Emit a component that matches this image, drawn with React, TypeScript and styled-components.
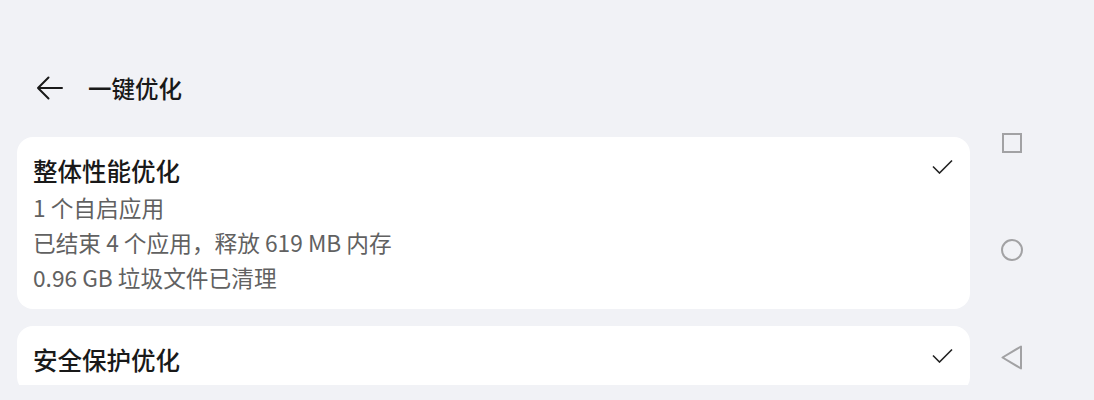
import React from 'react'
import styled, { createGlobalStyle } from 'styled-components'

const GlobalStyle = createGlobalStyle`
  html, body {
    margin: 0;
    padding: 0;
    background: #f1f2f6;
  }
  body {
    font-family: 'Noto Sans CJK SC', 'Noto Sans', sans-serif;
    color: #191919;
  }
`

const Screen = styled.div`
  display: flex;
  width: 1094px;
  height: 400px;
  overflow: hidden;
  background: #f1f2f6;
`

const Main = styled.div`
  display: flex;
  flex-direction: column;
  width: 970px;
  padding-top: 64px;
  box-sizing: border-box;
`

const Header = styled.div`
  display: flex;
  align-items: center;
  height: 48px;
  padding-left: 36px;
  gap: 25px;
`

const BackButton = styled.button`
  display: flex;
  align-items: center;
  justify-content: center;
  padding: 0;
  border: none;
  background: none;
  cursor: pointer;
`

const PageTitle = styled.h1`
  margin: 0;
  font-size: 23.5px;
  font-weight: 500;
  line-height: 32px;
  color: #191919;
`

const List = styled.div`
  display: flex;
  flex-direction: column;
  gap: 17px;
  margin-top: 25px;
  padding-left: 17px;
  height: 248px;
  overflow: hidden;
`

const Card = styled.div`
  display: flex;
  align-items: flex-start;
  flex-shrink: 0;
  background: #ffffff;
  border-radius: 16px;
  padding: 18px 17px 14px 16px;
`

const CardBody = styled.div`
  flex: 1;
  display: flex;
  flex-direction: column;
`

const CardTitle = styled.div`
  font-size: 24.5px;
  font-weight: 500;
  line-height: 32px;
  margin-bottom: 3px;
  color: #191919;
`

const Detail = styled.div`
  font-size: 22.7px;
  line-height: 35px;
  color: #616161;
`

const CheckMark = styled.svg`
  margin-top: 4px;
  flex-shrink: 0;
`

const NavBar = styled.div`
  display: flex;
  flex-direction: column;
  align-items: center;
  width: 84px;
  padding-top: 133px;
`

const NavSlot = styled.div<{ $h: number }>`
  display: flex;
  justify-content: center;
  height: ${(p) => p.$h}px;
`

const Check = () => (
  <CheckMark width="21" height="15" viewBox="0 0 21 15">
    <path d="M1 7.5 L7.5 14 L20 1.5" fill="none" stroke="#222" strokeWidth="1.6" />
  </CheckMark>
)

const sections = [
  {
    title: '整体性能优化',
    details: ['1 个自启应用', '已结束 4 个应用，释放 619 MB 内存', '0.96 GB 垃圾文件已清理'],
  },
  {
    title: '安全保护优化',
    details: [],
  },
]

const App = () => {
  return (
    <>
      <GlobalStyle />
      <Screen>
        <Main>
          <Header>
            <BackButton aria-label="返回">
              <svg width="27" height="24" viewBox="0 0 27 24">
                <path
                  d="M26 12 H2 M12.5 1.5 L2 12 L12.5 22.5"
                  fill="none"
                  stroke="#191919"
                  strokeWidth="2"
                  strokeLinecap="round"
                  strokeLinejoin="round"
                />
              </svg>
            </BackButton>
            <PageTitle>一键优化</PageTitle>
          </Header>
          <List>
            {sections.map((s) => (
              <Card key={s.title}>
                <CardBody>
                  <CardTitle>{s.title}</CardTitle>
                  {s.details.map((d) => (
                    <Detail key={d}>{d}</Detail>
                  ))}
                </CardBody>
                <Check />
              </Card>
            ))}
          </List>
        </Main>
        <NavBar>
          <NavSlot $h={106}>
            <svg width="20" height="20" viewBox="0 0 20 20">
              <rect x="1" y="1" width="18" height="18" fill="none" stroke="#a2a2a4" strokeWidth="2" />
            </svg>
          </NavSlot>
          <NavSlot $h={106}>
            <svg width="22" height="22" viewBox="0 0 22 22">
              <circle cx="11" cy="11" r="10" fill="none" stroke="#a2a2a4" strokeWidth="2" />
            </svg>
          </NavSlot>
          <NavSlot $h={30}>
            <svg width="22" height="25" viewBox="0 0 22 25">
              <path d="M20 1.5 V23.5 L1.5 12.5 Z" fill="none" stroke="#a2a2a4" strokeWidth="2" strokeLinejoin="round" />
            </svg>
          </NavSlot>
        </NavBar>
      </Screen>
    </>
  )
}

export default App
